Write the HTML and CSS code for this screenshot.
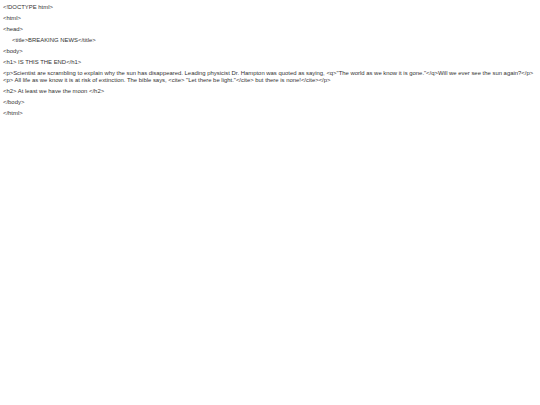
FILE: index.html
```html
<!DOCTYPE html>
<html>
<head>
<meta charset="utf-8">
<title>BREAKING NEWS</title>
<link rel="stylesheet" href="styles.css">
</head>
<body>
<div class="src">
<div class="ln">&lt;!DOCTYPE html&gt;</div>
<div class="ln">&lt;html&gt;</div>
<div class="ln">&lt;head&gt;</div>
<div class="ln ind">&lt;title&gt;BREAKING NEWS&lt;/title&gt;</div>
<div class="ln">&lt;body&gt;</div>
<div class="ln">&lt;h1&gt; IS THIS THE END&lt;/h1&gt;</div>
<div class="ln">&lt;p&gt;Scientist are scrambling to explain why the sun has disappeared. Leading physicist Dr. Hampton was quoted as saying, &lt;q&gt;"The world as we know it is gone."&lt;/q&gt;Will we ever see the sun again?&lt;/p&gt;<br>&lt;p&gt; All life as we know it is at risk of extinction. The bible says, &lt;cite&gt; "Let there be light."&lt;/cite&gt; but there is none!&lt;/cite&gt;&lt;/p&gt;</div>
<div class="ln">&lt;h2&gt; At least we have the moon &lt;/h2&gt;</div>
<div class="ln">&lt;/body&gt;</div>
<div class="ln">&lt;/html&gt;</div>
</div>
</body>
</html>
```
FILE: styles.css
```css
html, body {
  margin: 0;
  padding: 0;
  background: #ffffff;
}
.src {
  padding: 4px 3px;
  font-family: "Liberation Sans", Arial, sans-serif;
  font-size: 5.92px;
  line-height: 7px;
  color: #333333;
  display: flex;
  flex-direction: column;
  gap: 4px;
}
.ln {
  white-space: nowrap;
}
.ind {
  padding-left: 9px;
}
```
